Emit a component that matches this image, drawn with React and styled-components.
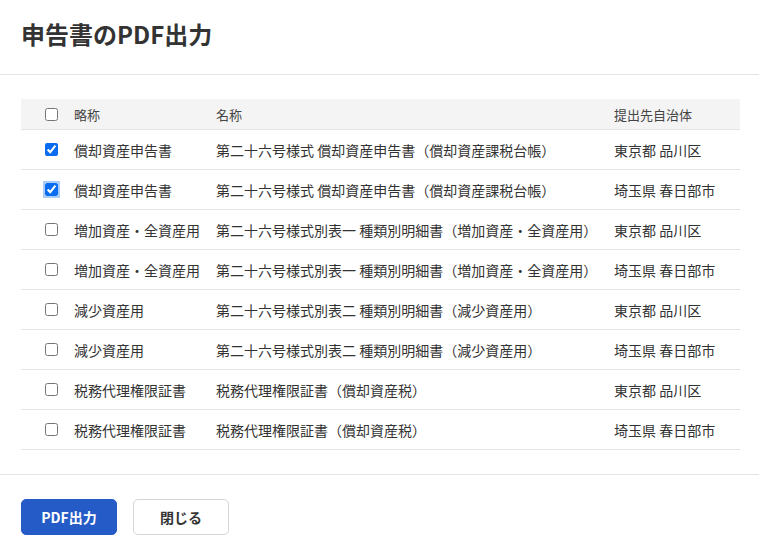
import React, { useState } from 'react';
import styled, { createGlobalStyle } from 'styled-components';

const Global = createGlobalStyle`
  body { margin:0; background:#fff; font-family:"Noto Sans CJK JP","Noto Sans",sans-serif; color:#333; }
`;

const Page = styled.div`width:759px;height:559px;display:flex;flex-direction:column;`;
const Header = styled.div`height:75px;box-sizing:border-box;padding:0 21px;display:flex;align-items:center;border-bottom:1px solid #e4e4e4;`;
const Title = styled.h1`margin:0;font-size:24px;font-weight:700;color:#333;position:relative;top:-4px;`;
const Body = styled.div`padding:24px 19px 24px 21px;border-bottom:1px solid #e4e4e4;`;
const Table = styled.table`width:100%;border-collapse:collapse;table-layout:fixed;font-size:14px;`;
const Th = styled.th`
  height:30px;padding:0;background:#f5f4f5;text-align:left;font-weight:400;font-size:13px;color:#444;
  border-bottom:1px solid #e4e4e4;width:${p => p.$w || 'auto'};
`;
const Td = styled.td`height:39px;padding:0;border-bottom:1px solid #e4e4e4;color:#333;white-space:nowrap;`;
const CheckCell = styled.td`padding:0 0 0 24px;height:39px;border-bottom:1px solid #e4e4e4;`;
const CheckHead = styled.th`width:53px;box-sizing:border-box;padding:0 0 0 24px;height:30px;background:#f5f4f5;border-bottom:1px solid #e4e4e4;`;
const Check = styled.input`
  width:13px;height:13px;margin:0;display:block;accent-color:#0a6cf0;
  box-shadow:${p => (p.$focus ? '0 0 0 2px rgba(10,108,240,0.35)' : 'none')};
  border-radius:3px;
`;
const Footer = styled.div`padding:24px 21px;display:flex;gap:16px;`;
const Button = styled.button`
  width:96px;height:36px;border-radius:5px;font-family:inherit;font-size:14px;font-weight:700;cursor:pointer;
  background:${p => (p.$primary ? '#255bc6' : '#fff')};
  color:${p => (p.$primary ? '#fff' : '#333')};
  border:1px solid ${p => (p.$primary ? '#255bc6' : '#d6d6d6')};
`;

const rows = [
  ['償却資産申告書', '第二十六号様式 償却資産申告書（償却資産課税台帳）', '東京都 品川区', true],
  ['償却資産申告書', '第二十六号様式 償却資産申告書（償却資産課税台帳）', '埼玉県 春日部市', true],
  ['増加資産・全資産用', '第二十六号様式別表一 種類別明細書（増加資産・全資産用）', '東京都 品川区'],
  ['増加資産・全資産用', '第二十六号様式別表一 種類別明細書（増加資産・全資産用）', '埼玉県 春日部市'],
  ['減少資産用', '第二十六号様式別表二 種類別明細書（減少資産用）', '東京都 品川区'],
  ['減少資産用', '第二十六号様式別表二 種類別明細書（減少資産用）', '埼玉県 春日部市'],
  ['税務代理権限証書', '税務代理権限証書（償却資産税）', '東京都 品川区'],
  ['税務代理権限証書', '税務代理権限証書（償却資産税）', '埼玉県 春日部市'],
];

export default function App() {
  const [checked, setChecked] = useState(rows.map(r => !!r[3]));
  const toggle = i => setChecked(c => c.map((v, j) => (j === i ? !v : v)));
  return (
    <Page>
      <Global />
      <Header><Title>申告書のPDF出力</Title></Header>
      <Body>
        <Table>
          <thead>
            <tr>
              <CheckHead><Check type="checkbox" readOnly checked={false} /></CheckHead>
              <Th $w="142px">略称</Th>
              <Th $w="398px">名称</Th>
              <Th>提出先自治体</Th>
            </tr>
          </thead>
          <tbody>
            {rows.map((r, i) => (
              <tr key={i}>
                <CheckCell>
                  <Check type="checkbox" checked={checked[i]} $focus={i === 1} onChange={() => toggle(i)} />
                </CheckCell>
                <Td>{r[0]}</Td>
                <Td>{r[1]}</Td>
                <Td>{r[2]}</Td>
              </tr>
            ))}
          </tbody>
        </Table>
      </Body>
      <Footer>
        <Button $primary>PDF出力</Button>
        <Button>閉じる</Button>
      </Footer>
    </Page>
  );
}
